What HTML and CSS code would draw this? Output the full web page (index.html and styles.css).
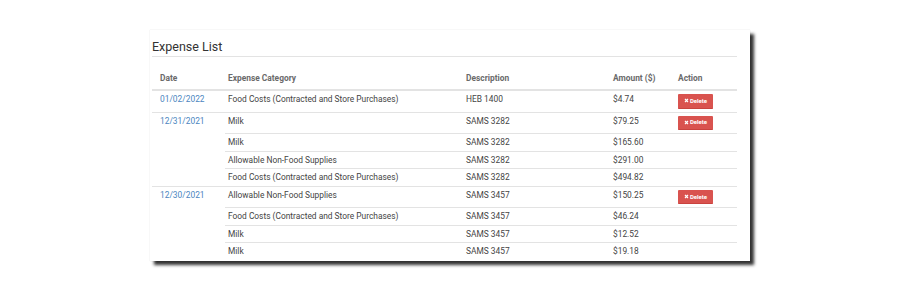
FILE: index.html
```html
<!DOCTYPE html>
<html>
<head>
<meta charset="utf-8">
<link rel="stylesheet" href="styles.css">
</head>
<body>
<div class="card">
  <h2 class="title">Expense List</h2>
  <table class="expenses">
    <colgroup>
      <col class="c-date"><col class="c-cat"><col class="c-desc"><col class="c-amt"><col class="c-act">
    </colgroup>
    <thead>
      <tr><th class="date">Date</th><th>Expense Category</th><th>Description</th><th>Amount ($)</th><th>Action</th></tr>
    </thead>
    <tbody>
      <tr class="group">
        <td class="date"><a>01/02/2022</a></td>
        <td>Food Costs (Contracted and Store Purchases)</td><td>HEB 1400</td><td>$4.74</td>
        <td><span class="btn"><svg viewBox="0 0 10 10" class="x"><path d="M2 2L8 8M8 2L2 8"/></svg>Delete</span></td>
      </tr>
      <tr class="group">
        <td class="date" rowspan="4"><a>12/31/2021</a></td>
        <td>Milk</td><td>SAMS 3282</td><td>$79.25</td>
        <td><span class="btn"><svg viewBox="0 0 10 10" class="x"><path d="M2 2L8 8M8 2L2 8"/></svg>Delete</span></td>
      </tr>
      <tr><td>Milk</td><td>SAMS 3282</td><td>$165.60</td><td></td></tr>
      <tr><td>Allowable Non-Food Supplies</td><td>SAMS 3282</td><td>$291.00</td><td></td></tr>
      <tr><td>Food Costs (Contracted and Store Purchases)</td><td>SAMS 3282</td><td>$494.82</td><td></td></tr>
      <tr class="group">
        <td class="date" rowspan="4"><a>12/30/2021</a></td>
        <td>Allowable Non-Food Supplies</td><td>SAMS 3457</td><td>$150.25</td>
        <td><span class="btn"><svg viewBox="0 0 10 10" class="x"><path d="M2 2L8 8M8 2L2 8"/></svg>Delete</span></td>
      </tr>
      <tr><td>Food Costs (Contracted and Store Purchases)</td><td>SAMS 3457</td><td>$46.24</td><td></td></tr>
      <tr><td>Milk</td><td>SAMS 3457</td><td>$12.52</td><td></td></tr>
      <tr><td>Milk</td><td>SAMS 3457</td><td>$19.18</td><td></td></tr>
    </tbody>
  </table>
</div>
</body>
</html>
```

FILE: styles.css
```css
html, body {
  margin: 0;
  padding: 0;
  background: #ffffff;
}
body {
  font-family: Roboto, "Liberation Sans", sans-serif;
  color: #444;
  min-height: 301px;
  padding: 30px 0 40px 150px;
  box-sizing: border-box;
}
.card {
  width: 600px;
  height: 231px;
  box-sizing: border-box;
  padding: 9px 13px 0 2px;
  background: #fff;
  overflow: hidden;
  box-shadow: 0 0 1px rgba(0,0,0,0.18), 4px 4px 3px rgba(30,30,30,0.9);
}
.title {
  margin: 0;
  font-size: 12.5px;
  line-height: 16px;
  font-weight: 400;
  color: #333;
  padding-bottom: 1px;
  border-bottom: 1px solid #e3e3e3;
}
.expenses {
  margin-top: 13px;
  width: 585px;
  table-layout: fixed;
  border-collapse: collapse;
  font-size: 8.4px;
  line-height: 10.6px;
}
.c-date { width: 73px; }
.c-cat { width: 238px; }
.c-desc { width: 147px; }
.c-amt { width: 65px; }
.c-act { width: 62px; }
.expenses th {
  text-align: left;
  font-weight: 700;
  color: #6a6a6a;
  padding: 3px 3px 5px;
  border-bottom: 2px solid #e3e3e3;
  line-height: 11px;
}
.expenses td {
  padding: 3px 3px;
  vertical-align: top;
  border-top: 1px solid #e3e3e3;
  color: #444;
  white-space: nowrap;
}
.expenses thead + tbody tr:first-child td {
  border-top: none;
}
.expenses .date {
  padding-left: 8px;
}
.date a {
  color: #4b86c0;
}
.btn {
  display: flex;
  align-items: center;
  justify-content: center;
  gap: 1px;
  width: 35px;
  height: 14.5px;
  box-sizing: border-box;
  background: #d9534f;
  border-bottom: 1px solid #c9433f;
  border-radius: 1px;
  color: #fff;
  font-size: 6px;
  font-weight: 700;
  line-height: 14px;
}
.x {
  width: 5px;
  height: 5px;
  stroke: #fff;
  stroke-width: 2.4;
  fill: none;
}
```
